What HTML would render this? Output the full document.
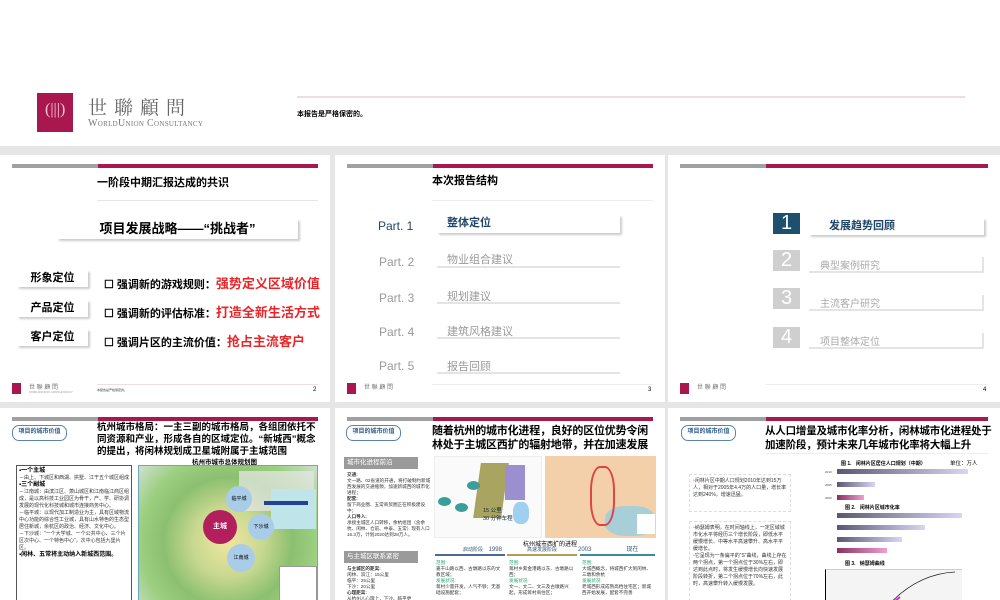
<!DOCTYPE html>
<html><head><meta charset="utf-8">
<style>
*{margin:0;padding:0;box-sizing:border-box}
body{width:1000px;height:600px;overflow:hidden;background:#e6e6e6;position:relative;font-family:"Liberation Sans","Noto Sans CJK SC",sans-serif;color:#000}
.a{position:absolute}
.top{left:0;top:0;width:1000px;height:146px;background:#fff}
.slide{position:absolute;background:#fff;overflow:hidden}
.g{position:absolute;height:4px;background:#a0a0a0}
.m{position:absolute;height:4px;background:#a8184f}
.t{position:absolute;white-space:nowrap}
.lbl{position:absolute;background:#fff;box-shadow:2px 2px 2px #ccc;font-size:11px;font-weight:bold;text-align:center;line-height:17px}
.pill{position:absolute;border:1.5px solid #5a86ad;border-radius:7px;font-size:6px;color:#2a5b8a;font-weight:bold;text-align:center;line-height:13px;width:55px;height:16px}
.fl{position:absolute;width:9px;height:11px;background:#a8184f}
.tiny{font-size:5px;color:#444}
.bar{position:absolute;height:5px}
</style></head><body>
<div class="a top">
 <div class="a" style="left:37px;top:93px;width:36px;height:39px;background:#a8184f"></div>
 <div class="t" style="left:45px;top:101px;color:#f4c6d6;font-size:16px;font-family:'Liberation Serif',serif">(|||)</div>
 <div class="t" style="left:88px;top:93px;font-size:19px;letter-spacing:7px;color:#666;font-family:'Liberation Serif','Noto Serif CJK SC',serif">世聯顧問</div>
 <div class="t" style="left:88px;top:118px;font-size:10px;letter-spacing:0.3px;color:#777;font-family:'Liberation Serif',serif;font-variant:small-caps">WorldUnion Consultancy</div>
 <div class="a" style="left:297px;top:96px;width:668px;height:2px;background:#f0dde4"></div>
 <div class="t" style="left:297px;top:109px;font-size:7px;font-weight:bold">本报告是严格保密的。</div>
</div>

<!-- slide 1 -->
<div class="slide" style="left:0;top:155px;width:330px;height:247px">
 <div class="g" style="left:12px;top:9px;width:86px"></div><div class="m" style="left:98px;top:9px;width:220px"></div>
 <div class="t" style="left:97px;top:19px;font-size:11px;font-weight:bold">一阶段中期汇报达成的共识</div>
 <div class="a" style="left:97px;top:45px;width:221px;height:1px;background:#e6e6e6"></div>
 <div class="lbl" style="left:57px;top:64px;width:241px;height:20px;font-size:13px;line-height:20px">项目发展战略——“挑战者”</div>
 <div class="lbl" style="left:17px;top:115px;width:71px">形象定位</div>
 <div class="lbl" style="left:17px;top:145px;width:71px">产品定位</div>
 <div class="lbl" style="left:17px;top:174px;width:71px">客户定位</div>
 <div class="t" style="left:104px;top:118px;font-size:11px;font-weight:bold">☐ 强调新的游戏规则：<span style="color:#e8262a;font-size:13px">强势定义区域价值</span></div>
 <div class="t" style="left:104px;top:147px;font-size:11px;font-weight:bold">☐ 强调新的评估标准：<span style="color:#e8262a;font-size:13px">打造全新生活方式</span></div>
 <div class="t" style="left:104px;top:176px;font-size:11px;font-weight:bold">☐ 强调片区的主流价值：<span style="color:#e8262a;font-size:13px">抢占主流客户</span></div>
 <div class="fl" style="left:12px;top:228px"></div><div class="t tiny" style="left:29px;top:227px;font-size:6px;color:#777">世 聯 顧 問</div><div class="t tiny" style="left:29px;top:235px;font-size:3px;color:#999">WORLDUNION CONSULTANCY</div>
 <div class="a" style="left:97px;top:229px;width:221px;height:1px;background:#f0dde4"></div>
 <div class="t tiny" style="left:97px;top:233px;font-size:3px">本报告是严格保密的。</div>
 <div class="t" style="left:313px;top:232px;font-size:6px">2</div>
</div>

<!-- slide 2 -->
<div class="slide" style="left:335px;top:155px;width:330px;height:247px">
 <div class="g" style="left:12px;top:9px;width:86px"></div><div class="m" style="left:98px;top:9px;width:220px"></div>
 <div class="t" style="left:97px;top:17px;font-size:11px;font-weight:bold">本次报告结构</div>
 <div class="a" style="left:97px;top:45px;width:221px;height:1px;background:#eee"></div>
 <div class="t" style="left:43px;top:64px;font-size:12px;color:#1f4568">Part. 1</div>
 <div class="lbl" style="left:102px;top:60px;width:183px;height:18px;text-align:left;padding-left:10px;color:#1f4568;font-size:11px">整体定位</div>
 <div class="t" style="left:44px;top:100px;font-size:12px;color:#999">Part. 2</div>
 <div class="t" style="left:112px;top:96px;font-size:11px;color:#999">物业组合建议</div><div class="a" style="left:102px;top:111px;width:183px;height:2px;background:#e4e4e4"></div>
 <div class="t" style="left:44px;top:136px;font-size:12px;color:#999">Part. 3</div>
 <div class="t" style="left:112px;top:133px;font-size:11px;color:#999">规划建议</div><div class="a" style="left:102px;top:147px;width:183px;height:2px;background:#e4e4e4"></div>
 <div class="t" style="left:44px;top:170px;font-size:12px;color:#999">Part. 4</div>
 <div class="t" style="left:112px;top:168px;font-size:11px;color:#999">建筑风格建议</div><div class="a" style="left:102px;top:182px;width:183px;height:2px;background:#e4e4e4"></div>
 <div class="t" style="left:44px;top:204px;font-size:12px;color:#999">Part. 5</div>
 <div class="t" style="left:112px;top:203px;font-size:11px;color:#999">报告回顾</div><div class="a" style="left:102px;top:217px;width:183px;height:2px;background:#e4e4e4"></div>
 <div class="fl" style="left:12px;top:228px"></div><div class="t" style="left:29px;top:227px;font-size:6px;color:#777">世 聯 顧 問</div>
 <div class="a" style="left:97px;top:229px;width:221px;height:1px;background:#eee"></div>
 <div class="t" style="left:313px;top:232px;font-size:6px">3</div>
</div>

<!-- slide 3 -->
<div class="slide" style="left:668px;top:155px;width:332px;height:247px">
 <div class="g" style="left:12px;top:9px;width:86px"></div><div class="m" style="left:98px;top:9px;width:222px"></div>
 <div class="a" style="left:105px;top:58px;width:27px;height:21px;background:#1d4f6e;color:#fff;font-size:20px;line-height:21px;text-align:center;font-weight:300">1</div>
 <div class="lbl" style="left:141px;top:63px;width:175px;height:17px;text-align:left;padding-left:20px;color:#1f4568">发展趋势回顾</div>
 <div class="a" style="left:105px;top:95px;width:27px;height:21px;background:#cfcfcf;color:#fff;font-size:20px;line-height:21px;text-align:center">2</div>
 <div class="t" style="left:152px;top:102px;font-size:10px;color:#aaa">典型案例研究</div><div class="a" style="left:141px;top:116px;width:175px;height:2px;background:#e4e4e4"></div><div class="a" style="left:314px;top:102px;width:2px;height:16px;background:#e4e4e4"></div>
 <div class="a" style="left:105px;top:133px;width:27px;height:21px;background:#cfcfcf;color:#fff;font-size:20px;line-height:21px;text-align:center">3</div>
 <div class="t" style="left:152px;top:140px;font-size:10px;color:#aaa">主流客户研究</div><div class="a" style="left:141px;top:154px;width:175px;height:2px;background:#e4e4e4"></div><div class="a" style="left:314px;top:140px;width:2px;height:16px;background:#e4e4e4"></div>
 <div class="a" style="left:105px;top:172px;width:27px;height:21px;background:#cfcfcf;color:#fff;font-size:20px;line-height:21px;text-align:center">4</div>
 <div class="t" style="left:152px;top:178px;font-size:10px;color:#aaa">项目整体定位</div><div class="a" style="left:141px;top:192px;width:175px;height:2px;background:#e4e4e4"></div><div class="a" style="left:314px;top:178px;width:2px;height:16px;background:#e4e4e4"></div>
 <div class="fl" style="left:12px;top:228px"></div><div class="t" style="left:29px;top:227px;font-size:6px;color:#777">世 聯 顧 問</div>
 <div class="a" style="left:97px;top:229px;width:223px;height:1px;background:#eee"></div>
 <div class="t" style="left:315px;top:232px;font-size:6px">4</div>
</div>

<!-- slide 4 -->
<div class="slide" style="left:0;top:408px;width:330px;height:192px">
 <div class="g" style="left:12px;top:9px;width:86px"></div><div class="m" style="left:98px;top:9px;width:220px"></div>
 <div class="pill" style="left:12px;top:17px">项目的城市价值</div>
 <div class="a" style="left:97px;top:14px;width:225px;font-size:9.5px;font-weight:bold;line-height:12px">杭州城市格局：一主三副的城市格局，各组团依托不同资源和产业，形成各自的区域定位。“新城西”概念的提出，将闲林规划成卫星城附属于主城范围</div>
 <div class="t" style="left:192px;top:48px;font-size:6.5px;font-weight:bold">杭州市城市总体规划图</div>
 <div class="a" style="left:16px;top:57px;width:116px;height:140px;border:1px solid #555;padding:2px;font-size:5px;line-height:7px;color:#333">
  <b style="font-size:6px;color:#000">▪一个主城</b><br>－由上、下城区和西湖、拱墅、江干五个城区组成<br><b style="font-size:6px;color:#000">▪三个副城</b><br>－江南城：由滨江区、萧山城区和江南临江商区组成，是以高科技工业园区为骨干，产、学、研协调发展的现代化科技城和城市连接商务中心。<br>－临平城：以现代加工制造业为主，具有区域物流中心功能的综合性工业城，具有山水特色的生态型居住新城，余杭区的政治、经济、文化中心。<br>－下沙城：“一个大学城、一个公共中心、三个片区次中心、一个特色中心”，次中心包括九堡片区。<br><b style="font-size:6px;color:#000">▪闲林、五常将主动纳入新城西范围。</b>
 </div>
 <div class="a" style="left:138px;top:57px;width:180px;height:140px;border:1px solid #6ab;background:radial-gradient(circle at 50% 55%,#f0e6a0 0,#c8d890 30%,#8cc070 55%,#9ccf80 75%,#cfe0d0 100%)">
  <div class="a" style="left:100px;top:5px;width:75px;height:40px;background:#e8e8e8;opacity:.7"></div>
  <div class="a" style="left:132px;top:23px;width:45px;height:40px;background:#bfe4ea"></div>
  <div class="a" style="left:64px;top:44px;width:34px;height:34px;border-radius:50%;background:#b21f5c;color:#fff;font-size:7px;line-height:34px;text-align:center;font-weight:bold">主城</div>
  <div class="a" style="left:87px;top:20px;width:26px;height:26px;border-radius:50%;background:#a9cde8;font-size:5px;line-height:26px;text-align:center">临平城</div>
  <div class="a" style="left:109px;top:48px;width:26px;height:26px;border-radius:50%;background:#a9cde8;font-size:5px;line-height:26px;text-align:center">下沙城</div>
  <div class="a" style="left:88px;top:78px;width:28px;height:28px;border-radius:50%;background:#a9cde8;font-size:5px;line-height:28px;text-align:center">江南城</div>
  <div class="a" style="left:125px;top:35px;width:44px;height:4px;background:#23409a"></div>
  <div class="a" style="left:140px;top:100px;width:38px;height:38px;background:#fff;border:1px solid #999"></div>
 </div>
</div>

<!-- slide 5 -->
<div class="slide" style="left:335px;top:408px;width:330px;height:192px">
 <div class="g" style="left:12px;top:9px;width:86px"></div><div class="m" style="left:98px;top:9px;width:220px"></div>
 <div class="pill" style="left:11px;top:17px">项目的城市价值</div>
 <div class="a" style="left:97px;top:16px;width:225px;font-size:11px;font-weight:bold;line-height:14px;letter-spacing:-0.2px">随着杭州的城市化进程，良好的区位优势令闲林处于主城区西扩的辐射地带，并在加速发展</div>
 <div class="a" style="left:9px;top:49px;width:74px;height:12px;background:#9a9a9a;color:#fff;font-size:6.5px;line-height:12px;padding-left:3px">城市化进程前沿</div>
 <div class="a" style="left:12px;top:64px;width:86px;font-size:4.6px;line-height:6px;color:#333"><b>交通:</b><br>文一路、02省道的开通，将打破制约新城西发展的交通瓶颈，加速新城西的城市化进程；<br><b>配套:</b><br>留下商业圈、五常商贸圈正在积极建设中；<br><b>人口导入:</b><br>承接主城区人口转移，余杭组团（含余杭、闲林、仓前、中泰、五常）现有人口16.3万，计划2020达到28万人。</div>
 <div class="a" style="left:9px;top:143px;width:74px;height:12px;background:#9a9a9a;color:#fff;font-size:6.5px;line-height:12px;padding-left:3px">与主城区联系紧密</div>
 <div class="a" style="left:12px;top:158px;width:86px;font-size:4.6px;line-height:6px;color:#333"><b>与主城区的距离:</b><br>闲林、滨江：15公里<br>临平：25公里<br>下沙：20公里<br><b>心理距离:</b><br>从杭州人心理上，下沙、临平更</div>
 <div class="a" style="left:99px;top:48px;width:108px;height:82px;background:#fafafa;border:1px solid #eee">
  <div class="a" style="left:42px;top:6px;width:28px;height:55px;background:#a9a560;transform:skewX(-8deg)"></div>
  <div class="a" style="left:70px;top:8px;width:20px;height:35px;background:#9c8fd0"></div>
  <div class="a" style="left:78px;top:45px;width:16px;height:22px;background:#9fd0f0;border-radius:40%"></div>
  <div class="a" style="left:32px;top:24px;width:13px;height:9px;border-radius:50%;background:#3a9e9a"></div>
  <div class="a" style="left:3px;top:40px;width:13px;height:9px;border-radius:50%;background:#3a9e9a"></div>
  <div class="a" style="left:20px;top:46px;width:13px;height:9px;border-radius:50%;background:#3a9e9a"></div>
  <div class="t" style="left:48px;top:49px;font-size:5.5px;color:#123">15 公里<br>30 分钟车程</div>
 </div>
 <div class="a" style="left:210px;top:48px;width:111px;height:82px;background:#f3cfaa">
  <div class="a" style="left:60px;top:50px;width:50px;height:30px;background:#a8cfd8;border-radius:40%"></div>
  <div class="a" style="left:45px;top:10px;width:25px;height:60px;border:2px solid #d44;border-radius:40%"></div>
  <div class="a" style="left:92px;top:58px;width:18px;height:20px;background:#fff"></div>
 </div>
 <div class="t" style="left:188px;top:131px;font-size:6px">杭州城市西扩的进程</div>
 <div class="t" style="left:128px;top:138px;font-size:5px;color:#357">启动阶段 &nbsp; &nbsp;<span style="font-size:6px">1998</span></div>
 <div class="t" style="left:192px;top:138px;font-size:5px;color:#357">高速发展阶段</div>
 <div class="t" style="left:243px;top:136px;font-size:6px;color:#357">2003 &nbsp; &nbsp; &nbsp; &nbsp; &nbsp; &nbsp; &nbsp; &nbsp; &nbsp; &nbsp; 现在</div>
 <div class="a" style="left:100px;top:146px;width:70px;height:1.5px;background:#4a6a9a"></div>
 <div class="a" style="left:172px;top:146px;width:70px;height:1.5px;background:#b0a050"></div>
 <div class="a" style="left:245px;top:146px;width:75px;height:1.5px;background:#3a8aa0"></div>
 <div class="a" style="left:101px;top:152px;width:215px;font-size:4.6px;line-height:6px;color:#333">
  <div class="a" style="left:0;width:68px"><span style="color:#2a6">范围:</span><br>嘉干山路以西、古墩路以东的文教区域；<br><span style="color:#2a6">发展状况:</span><br>蒋村少量开发，人气不够；无基础设施配套；</div>
  <div class="a" style="left:73px;width:68px"><span style="color:#2a6">范围:</span><br>蒋村乡紫金港路以东、古墩路以西；<br><span style="color:#2a6">发展状况:</span><br>文一、文二、文三及古墩路兴起，形成蒋村商住区；</div>
  <div class="a" style="left:146px;width:70px"><span style="color:#2a6">范围:</span><br>大城西概念，将城西扩大到闲林、三墩和余杭<br><span style="color:#2a6">发展状况:</span><br>老城西形成成熟高档住宅区；新城西开始发展，配套不完善</div>
 </div>
</div>

<!-- slide 6 -->
<div class="slide" style="left:668px;top:408px;width:332px;height:192px">
 <div class="g" style="left:12px;top:9px;width:86px"></div><div class="m" style="left:98px;top:9px;width:222px"></div>
 <div class="pill" style="left:13px;top:17px">项目的城市价值</div>
 <div class="a" style="left:97px;top:16px;width:228px;font-size:10.5px;font-weight:bold;line-height:14px;letter-spacing:-0.2px">从人口增量及城市化率分析，闲林城市化进程处于加速阶段，预计未来几年城市化率将大幅上升</div>
 <div class="a" style="left:97px;top:45px;width:223px;height:1px;background:#eee"></div>
 <div class="a" style="left:21px;top:66px;width:102px;height:38px;border:1px dashed #ddd;font-size:5px;line-height:7px;color:#333;padding:3px 3px"><span style="color:#a8184f">▫</span>闲林片区中期人口规划2010年达到15万人，相对于2005年4.4万的人口量，增长率达到240%，增速迅猛。</div>
 <div class="a" style="left:21px;top:113px;width:102px;height:85px;border:1px dashed #ddd;font-size:5px;line-height:7px;color:#333;padding:3px 3px"><span style="color:#a8184f">▫</span>纳瑟姆表明，在时间轴线上，一定区域城市化水平将经历三个增长阶段，即低水平缓慢增长、中等水平高速攀升、高水平平缓增长。<br><span style="color:#a8184f">▫</span>它呈现为一条扁平的“S”曲线，曲线上存在两个拐点，第一个拐点位于30%左右，即达到此点时，将发生缓慢增长向快速发展阶段转折，第二个拐点位于70%左右，此时，高速攀升转入缓慢发展。</div>
 <div class="t" style="left:173px;top:52px;font-size:5px;font-weight:bold">图 1. &nbsp; 闲林片区居住人口规划（中期）</div>
 <div class="t" style="left:282px;top:51px;font-size:5.5px">单位：万人</div>
 <div class="t tiny" style="left:157px;top:62px;font-size:3px">2010</div><div class="bar" style="left:169px;top:61px;width:131px;background:linear-gradient(90deg,#5a5870,#d8d6f4)"></div>
 <div class="t tiny" style="left:157px;top:75px;font-size:3px">2005</div><div class="bar" style="left:169px;top:74px;width:38px;background:linear-gradient(90deg,#5a5870,#d8d6f4)"></div>
 <div class="t tiny" style="left:157px;top:88px;font-size:3px">2000</div><div class="bar" style="left:169px;top:87px;width:27px;background:linear-gradient(90deg,#8a3060,#f0a0d0)"></div>
 <div class="t" style="left:177px;top:96px;font-size:5px;font-weight:bold">图 2. &nbsp; 闲林片区城市化率</div>
 <div class="bar" style="left:169px;top:105px;width:125px;background:linear-gradient(90deg,#5a5870,#d8d6f4)"></div>
 <div class="bar" style="left:169px;top:117px;width:88px;background:linear-gradient(90deg,#5a5870,#d8d6f4)"></div>
 <div class="bar" style="left:169px;top:129px;width:65px;background:linear-gradient(90deg,#5a5870,#d8d6f4)"></div>
 <div class="bar" style="left:169px;top:140px;width:50px;background:linear-gradient(90deg,#8a3060,#f0a0d0)"></div>
 <div class="t" style="left:177px;top:152px;font-size:5px;font-weight:bold">图 3. &nbsp; 纳瑟姆曲线</div>
 <div class="a" style="left:157px;top:161px;width:137px;height:40px;background:#f4f4f4;border-left:1px solid #000;border-top:1px solid #ccc"></div>
 <svg class="a" style="left:157px;top:161px" width="140" height="40"><path d="M60 40 Q90 5 130 3" stroke="#222" fill="none" stroke-width="0.8"/><path d="M60 40 L75 28" stroke="#e020e0" stroke-width="2"/></svg>
</div>
</body></html>
